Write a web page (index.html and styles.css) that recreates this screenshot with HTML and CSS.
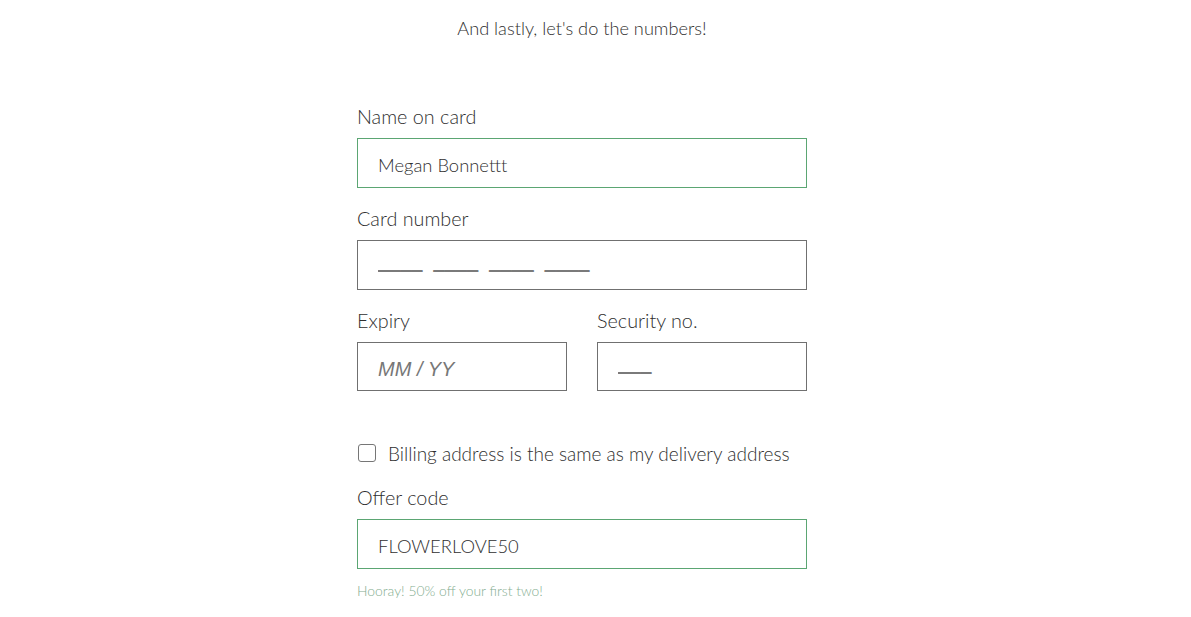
FILE: index.html
```html
<!DOCTYPE html>
<html lang="en">
<head>
<meta charset="utf-8">
<title>Payment</title>
<link rel="stylesheet" href="styles.css">
</head>
<body>
<div class="page">
  <p class="title">And lastly, let's do the numbers!</p>
  <form class="form">
    <div class="field">
      <label class="label" for="name">Name on card</label>
      <input class="input input-valid" id="name" type="text" value="Megan Bonnettt">
    </div>
    <div class="field">
      <label class="label" for="card">Card number</label>
      <input class="input input-dash" id="card" type="text" placeholder="____&#160;&#160;____&#160;&#160;____&#160;&#160;____">
    </div>
    <div class="row">
      <div class="field">
        <label class="label" for="exp">Expiry</label>
        <input class="input input-italic" id="exp" type="text" placeholder="MM / YY">
      </div>
      <div class="field">
        <label class="label" for="cvc">Security no.</label>
        <input class="input input-dash" id="cvc" type="text" placeholder="___">
      </div>
    </div>
    <label class="check">
      <input class="checkbox" type="checkbox">
      <span class="check-text">Billing address is the same as my delivery address</span>
    </label>
    <div class="field field-last">
      <label class="label" for="offer">Offer code</label>
      <input class="input input-valid" id="offer" type="text" value="FLOWERLOVE50">
      <p class="hint">Hooray! 50% off your first two!</p>
    </div>
  </form>
</div>
</body>
</html>
```

FILE: styles.css
```css
* { box-sizing: border-box; }
body {
  margin: 0;
  background: #fff;
  color: #2f2f2f;
  font-family: Lato, "Open Sans", sans-serif;
  font-weight: 300;
}
.page {
  padding: 14px 27px 0 0;
}
.title {
  margin: 0;
  text-align: center;
  font-size: 18.2px;
  line-height: 28px;
}
.form {
  width: 450px;
  margin: 66px auto 0;
}
.field {
  display: flex;
  flex-direction: column;
  margin-bottom: 22px;
}
.label {
  font-size: 19.8px;
  line-height: 16px;
  margin-bottom: 14px;
}
.input {
  height: 50px;
  width: 100%;
  border: 1px solid #707070;
  border-radius: 0;
  padding: 4px 20px 0;
  font-family: Lato, sans-serif;
  font-weight: 300;
  font-size: 18.4px;
  color: #2f2f2f;
  background: #fff;
  outline: none;
}
.input::placeholder {
  font-family: "Liberation Sans", Arial, sans-serif;
  font-weight: 400;
  font-size: 20px;
  color: #777;
}
.input-italic::placeholder { font-style: italic; }
.input-dash { padding: 0 20px 10px; }
.input-dash::placeholder {
  color: #7a7a7a;
  text-shadow: 0 1px 0 #7a7a7a;
}
.input-valid { border-color: #5ba673; }
.row {
  display: grid;
  grid-template-columns: 1fr 1fr;
  column-gap: 30px;
}
.row .input { height: 49px; }
.check {
  display: flex;
  align-items: center;
  gap: 12px;
  margin-top: 28px;
  margin-bottom: 24px;
  font-size: 19px;
  line-height: 24px;
}
.check-text { position: relative; top: 1px; }
.checkbox {
  appearance: none;
  -webkit-appearance: none;
  margin: 0 0 0 1px;
  width: 18px;
  height: 18px;
  border: 1px solid #767676;
  border-radius: 3px;
  background: #fff;
  flex: none;
}
.field-last { margin-bottom: 0; }
.hint {
  margin: 13px 0 0;
  font-size: 13.9px;
  line-height: 18px;
  font-weight: 300;
  color: #84ad90;
}
```
